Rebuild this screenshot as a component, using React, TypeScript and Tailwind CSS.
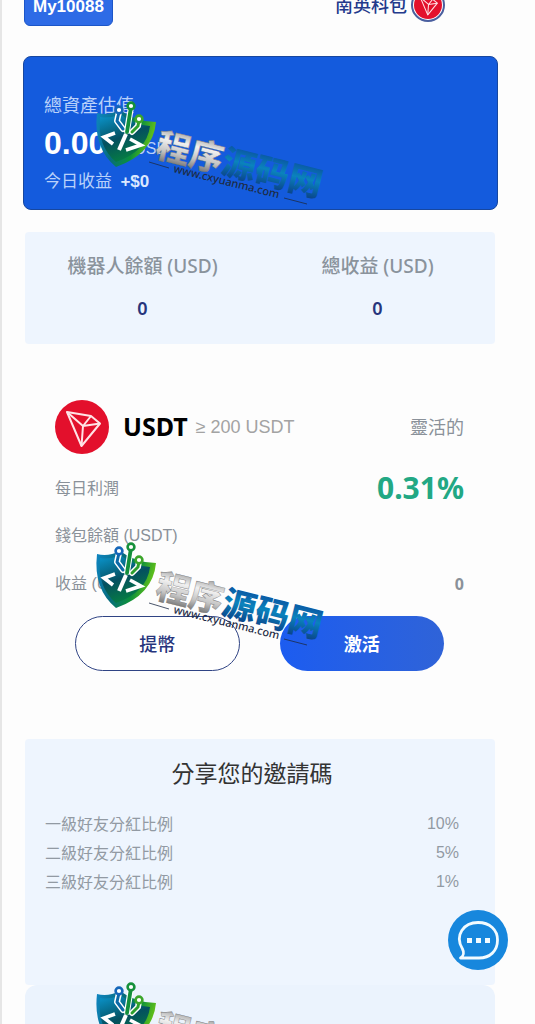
import React, { useId } from 'react';

const referralLevels = [
    { label: '一級好友分紅比例', rate: '10%' },
    { label: '二級好友分紅比例', rate: '5%' },
    { label: '三級好友分紅比例', rate: '1%' },
];

const TronMark: React.FC<{ className: string }> = ({ className }) => (
    <svg viewBox="0 0 54 54" className={className} aria-hidden="true">
        <circle cx="27" cy="27" r="27" fill="#e3102c" />
        <g fill="none" stroke="#ffe3e6" strokeWidth="2" strokeLinejoin="round">
            <path d="M12 12 L36 16 L45 23.500 L26.500 46 Z" />
            <path d="M12 12 L28 26 L45 23.500 M28 26 L26.500 46 M28 26 L36 16" />
        </g>
    </svg>
);

const Watermark: React.FC<{ className: string }> = ({ className }) => {
    const id = useId();

    return (
        <svg
            viewBox="0 0 240 110"
            width="240"
            height="110"
            className={`pointer-events-none absolute left-[88px] z-20 ${className}`}
            aria-hidden="true"
        >
            <defs>
                <linearGradient id={`${id}shield`} x1="0" y1="0" x2="1" y2="0.3">
                    <stop offset="0" stopColor="#0f86c4" />
                    <stop offset="0.45" stopColor="#066c7c" />
                    <stop offset="0.75" stopColor="#0c8f3c" />
                    <stop offset="1" stopColor="#62c019" />
                </linearGradient>
                <linearGradient id={`${id}core`} x1="0.2" y1="0" x2="0.6" y2="1">
                    <stop offset="0" stopColor="#0a8fc4" />
                    <stop offset="0.5" stopColor="#04505f" />
                    <stop offset="1" stopColor="#06843e" />
                </linearGradient>
                <linearGradient id={`${id}gray`} x1="0" y1="0" x2="0" y2="1">
                    <stop offset="0.1" stopColor="#8b8b8b" />
                    <stop offset="0.4" stopColor="#f1f1f1" />
                    <stop offset="0.65" stopColor="#c4c4c4" />
                    <stop offset="0.9" stopColor="#6e6e6e" />
                </linearGradient>
                <linearGradient id={`${id}blue`} x1="0" y1="0" x2="0" y2="1">
                    <stop offset="0.15" stopColor="#0a4f9e" />
                    <stop offset="0.5" stopColor="#0a83bd" />
                    <stop offset="0.9" stopColor="#0a3f86" />
                </linearGradient>
            </defs>

            <path d="M7 13 Q18 16 30 10 Q46 22 66 22 Q63 54 26 67 Q3 48 7 13 Z" fill={`url(#${id}shield)`} />
            <path d="M10 17 Q20 19 30 14 Q44 25 60 26 Q57 51 26 62 Q7 46 10 17 Z" fill={`url(#${id}core)`} />

            <g fill="none" strokeLinecap="round" strokeLinejoin="round">
                <g stroke="#fff" strokeWidth="6">
                    <path d="M29 12 L27 21 L33 29" />
                    <path d="M41 7 L37 31" />
                    <path d="M49 20 L48 26 L42 32" />
                </g>
                <path d="M29 12 L27 21 L33 29" stroke="#0b6aa8" strokeWidth="3" />
                <path d="M41 7 L37 32" stroke="#138f3c" strokeWidth="3.800" />
                <path d="M49 20 L48 26 L42 32" stroke="#2c9f2c" strokeWidth="3" />
            </g>
            <circle cx="29" cy="10" r="3.400" fill="#fff" stroke="#1466b8" strokeWidth="2.600" />
            <circle cx="41" cy="6" r="3.400" fill="#fff" stroke="#15903a" strokeWidth="2.600" />
            <circle cx="49" cy="19" r="3.400" fill="#fff" stroke="#3ba52a" strokeWidth="2.600" />

            <g fill="none" stroke="#fff" strokeWidth="3.600" strokeLinejoin="miter">
                <path d="M25 33 L14 37 L23 44" />
                <path d="M36 34 L29 50" strokeWidth="4" />
                <path d="M40 39 L51 45 L36 50" />
            </g>

            <g transform="rotate(14 64 56)" className="font-['Noto_Sans_CJK_SC',sans-serif] text-[34px] font-black">
                <text x="64" y="56" fill={`url(#${id}gray)`} stroke="#777" strokeWidth="0.400">
                    程序
                </text>
                <text x="132" y="56" fill={`url(#${id}blue)`}>
                    源码网
                </text>
            </g>
            <text
                x="83"
                y="72"
                transform="rotate(14 83 72)"
                fill="#1d2b45"
                className="font-['Noto_Sans',sans-serif] text-[11px] font-medium"
            >
                www.cxyuanma.com
            </text>
            <path d="M59 62 L79 68 M194 98 L217 104" stroke="#1d2b45" strokeWidth="0.800" />
        </svg>
    );
};

const App: React.FC = () => {
    return (
        <main className="relative flex h-screen flex-col overflow-hidden border-l-2 border-[#e6e6e6] bg-[#fdfdfd] font-['Noto_Sans','Noto_Sans_CJK_TC',sans-serif] text-base">
            <header className="-mt-3 flex shrink-0 items-start justify-between pl-[22px] pr-[90px]">
                <button className="h-[38px] rounded-md border border-[#1c56c8] bg-[#2e6be6] px-2 font-['Liberation_Sans',sans-serif] text-[17px] font-bold text-white">
                    My10088
                </button>
                <a href="#wallet" className="flex items-center gap-1 text-lg font-medium text-[#243a8c]">
                    南英科包
                    <span className="flex size-[34px] items-center justify-center rounded-full border-2 border-[#4a5f9f] bg-white">
                        <TronMark className="size-7" />
                    </span>
                </a>
            </header>

            <section className="ml-[21px] mr-[37px] mt-[30px] flex h-[154px] shrink-0 flex-col justify-center gap-2 rounded-lg border border-[#17479f] bg-[#145bdd] px-5 pt-5 text-[#b9d1fa]">
                <p className="text-lg leading-6">總資產估值</p>
                <p className="flex items-baseline gap-7 leading-9">
                    <strong className="font-['Liberation_Sans',sans-serif] text-[32px] text-white">0.00</strong>
                    <span className="font-['Liberation_Sans',sans-serif] text-base">USD</span>
                </p>
                <p className="text-[17px] leading-6">
                    今日收益 <strong className="ml-1 font-['Liberation_Sans',sans-serif] text-[#dbe8ff]">+$0</strong>
                </p>
            </section>

            <section className="ml-[23px] mr-10 mt-[22px] grid h-28 shrink-0 grid-cols-2 content-center rounded bg-[#eef5fe] text-center">
                <div className="space-y-4">
                    <h2 className="text-[19px] font-medium leading-6 text-[#8a939c]">機器人餘額 (USD)</h2>
                    <p className="text-lg font-semibold text-[#27357d]">0</p>
                </div>
                <div className="space-y-4">
                    <h2 className="text-[19px] font-medium leading-6 text-[#8a939c]">總收益 (USD)</h2>
                    <p className="text-lg font-semibold text-[#27357d]">0</p>
                </div>
            </section>

            <section className="ml-[53px] mr-[71px] mt-14 shrink-0 text-[#8a9199]">
                <div className="flex h-[54px] items-center">
                    <TronMark className="size-[54px]" />
                    <h2 className="ml-[14px] text-[25px] font-bold text-black">USDT</h2>
                    <span className="ml-2 font-['Liberation_Sans',sans-serif] text-lg text-[#a3a3a3]">≥ 200 USDT</span>
                    <span className="ml-auto text-lg">靈活的</span>
                </div>
                <div className="mt-[10px] flex h-12 items-center justify-between">
                    <span>每日利潤</span>
                    <strong className="text-3xl font-bold text-[#22a884]">0.31%</strong>
                </div>
                <div className="flex h-12 items-center">
                    <span className="font-['Liberation_Sans','Noto_Sans_CJK_TC',sans-serif]">錢包餘額 (USDT)</span>
                </div>
                <div className="flex h-12 items-center justify-between">
                    <span className="font-['Liberation_Sans','Noto_Sans_CJK_TC',sans-serif]">收益 (USDT)</span>
                    <strong className="font-bold">0</strong>
                </div>
                <div className="mt-2 grid grid-cols-2 gap-10 px-5 text-lg font-medium">
                    <button className="h-[55px] rounded-full border border-[#2f4384] bg-white text-[#27357d]">提幣</button>
                    <button className="h-[55px] rounded-full bg-gradient-to-r from-[#1c5cf0] to-[#2f63d8] font-bold text-white">
                        激活
                    </button>
                </div>
            </section>

            <section className="ml-[23px] mr-10 mt-[68px] h-[246px] shrink-0 rounded bg-[#eef5fe] pl-5 pr-9 pt-4">
                <h2 className="text-center text-[23px] leading-9 text-[#333]">分享您的邀請碼</h2>
                <ul className="mt-[18px] text-[#929aa3]">
                    {referralLevels.map(({ label, rate }) => (
                        <li key={label} className="flex h-[29px] items-center justify-between">
                            <span>{label}</span>
                            <span className="font-['Liberation_Sans',sans-serif]">{rate}</span>
                        </li>
                    ))}
                </ul>
            </section>

            <section className="ml-[23px] mr-10 flex-1 rounded-t-xl bg-[#ebf3fd]" />

            <button
                aria-label="Chat"
                className="absolute bottom-[54px] right-[27px] z-10 flex size-[60px] items-center justify-center rounded-full bg-[#1787dd]"
            >
                <svg viewBox="0 0 60 60" className="size-full" fill="none">
                    <path
                        d="M12.500 48 C16 46 16 42 14.500 39 C6 25 16 12.500 30 12.500 C42 12.500 49.500 20 49.500 30 C49.500 41 42 48 31 48 Z"
                        stroke="#f2fbff"
                        strokeWidth="2.800"
                        strokeLinejoin="round"
                    />
                    <path d="M19 28 h5 v5 h-5 Z M28 28 h5 v5 h-5 Z M37 28 h5 v5 h-5 Z" fill="#f2fbff" />
                </svg>
            </button>

            <Watermark className="top-[100px]" />
            <Watermark className="top-[541px]" />
            <Watermark className="top-[981px]" />
        </main>
    );
};

export default App;
